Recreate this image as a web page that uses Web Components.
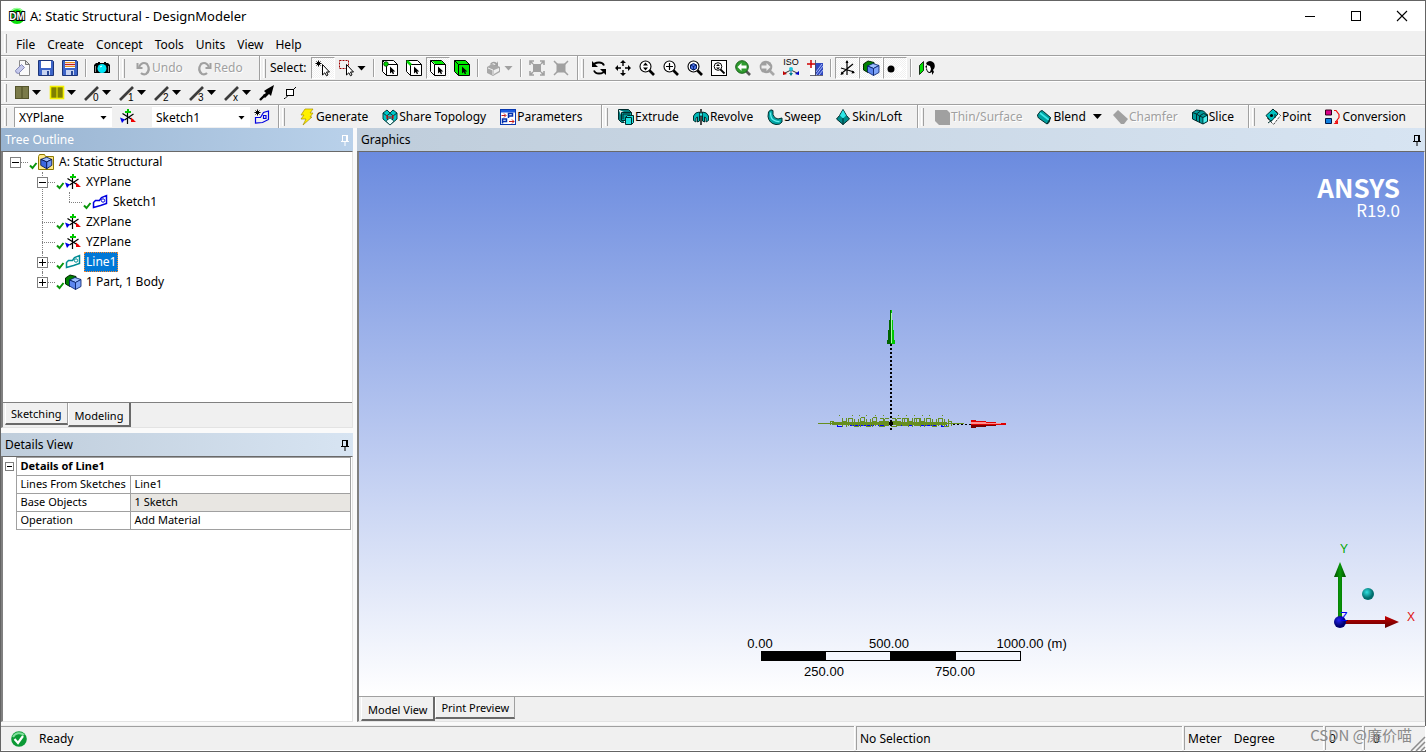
<!DOCTYPE html>
<html lang="en">
<head>
<meta charset="utf-8">
<title>A: Static Structural - DesignModeler</title>
<style>
  html, body { margin: 0; height: 100%; }
  body {
    font: 12px/16px "Noto Sans", "Noto Sans CJK SC", sans-serif;
    color: #000;
    background: #f0f0f0;
    overflow: hidden;
  }
</style>
</head>
<body>
<dm-app></dm-app>

<script>
/* ---------- icon artwork, 16 x 16 grid ---------- */
const lens = (inner, ring = '#000') =>
  `<circle cx="6.5" cy="6.5" r="5.5" fill="#fff" stroke="${ring}" stroke-width="1.1"/><path d="M10.500 10.500l4.500 4.500" stroke="${ring}" stroke-width="2.600"/>${inner}`;
const cube = (top, left, right, line = '#000') =>
  `<g stroke="${line}" stroke-width="1" stroke-linejoin="round"><path d="M1.500 4l7-2.500 6 2.500-6 3z" fill="${top}"/><path d="M1.500 4l7 3v8l-7-4z" fill="${left}"/><path d="M8.500 7l6-3v7l-6 4z" fill="${right}"/></g>`;
const cubelet = '<g stroke="#001a66" stroke-width=".8" stroke-linejoin="round"><path d="M4.500 6l5.500-2.500 6 2-5.500 3z" fill="#9ec0ff"/><path d="M4.500 6l6 2.500v7L4.500 12z" fill="#5d86ee"/><path d="M10.500 8.500l5.500-3v7l-5.500 3z" fill="#7ea4f8"/></g>';
const bodies = `<path d="M.5 4l4.500-3 6 1.500v4l-6 1v5l-4.500-2.500z" fill="#008000" stroke="#002800"/>${cubelet}`;
const frame = (fill, front) =>
  `<path d="M.5 .5h11l4 4v11h-11l-4-4z" fill="${fill}"/><rect x="5" y="5" width="10" height="10" fill="${front}"/><path d="M.5 .5h11l4 4v11h-11l-4-4zM.5 .5l4 4v11M4.500 4.500h11" fill="none" stroke="#000"/><path d="M8 6.500v7l1.700-1.500 1.200 2.300 1.200-.7-1-2.100h2.200z" fill="#000"/>`;
const cursor = '<path d="M7.500 4.500v10.500l2.300-2.200 1.700 3 1.500-.9-1.500-2.900h3z" fill="#fff" stroke="#000"/>';
const star = '<path d="M3.500 .5v6M.5 3.500h6M1.500 1.500l4 4M5.500 1.500l-4 4" stroke="#000" fill="none"/>';
const triad = '<path d="M7.500 2v13M2.500 4.500l11 7M13.500 5l-9 6" stroke="#000" stroke-width="1.200" fill="none"/><path d="M7 0h2v2h2v2H5V2h2z" fill="#00c800"/><path d="M0 8.500l5 2-3 3.500z" fill="#0000e8"/><path d="M11 8.500l5 4.500h-5z" fill="#f00000"/>';
const plate = c => `<path d="M1.500 8.500L3.500 6.500 7.500 6.500 9.500 3.500 14.500 1.500V9.500L8.500 11.500 1.500 13.500z" fill="#fff" stroke="${c}" stroke-width="1.500"/><circle cx="11" cy="6.500" r="1.700" fill="#fff" stroke="${c}"/>`;
const penLine = n => `<path d="M1 15l3-3L14 2" stroke="#3c3c3c" stroke-width="2.600" fill="none"/><text x="9" y="16" font-family="Liberation Sans" font-size="10" fill="#000">${n}</text>`;
const floppy = (label) => `<path d="M.5 .5h14l1 1v14H.5z" fill="#3c64c8" stroke="#1c3478"/><rect x="3" y="1" width="10" height="7" fill="#fff"/>${label}<rect x="4" y="10" width="8" height="5" fill="#c8d4f0"/><rect x="9" y="11" width="2" height="4" fill="#284898"/>`;

const ICONS = {
  dm: '<circle cx="8" cy="8" r="8" fill="#0be00b"/><path d="M2 4a7 7 0 0 1 12 0" stroke="#9cff9c" stroke-width="1.500" fill="none"/><text x="8" y="12" text-anchor="middle" font-family="Liberation Sans" font-weight="700" font-size="10" fill="#fff" stroke="#000" stroke-width="1.800" paint-order="stroke">DM</text>',
  new: '<path d="M5.500 .5h6l4 4v11h-10z" fill="#fafafa" stroke="#8a8a8a"/><path d="M11.500 .5v4h4z" fill="#ddd" stroke="#777"/><path d="M1.500 10.500l6-6 3 3-6 6q-3 0-3-3z" fill="#c5c9ec" stroke="#8488b8"/>',
  save: floppy(''),
  saveAs: floppy('<path d="M3 2.500h10M3 6.500h10" stroke="#e89018"/><path d="M3 4.500h10" stroke="#c02020" stroke-width="1.400"/>'),
  camera: '<path d="M0 5l2-2h2V2h2v1h4V2h2v1h2l2 2v8H0z" fill="#000"/><circle cx="8" cy="8.500" r="4.500" fill="#00e4f4"/><path d="M6 7l2-1" stroke="#fff"/><path d="M1.500 6v6M14.500 6v6" stroke="#888"/>',
  undo: '<path d="M2.500 3v5h5" fill="none" stroke="#a0a0a0" stroke-width="2"/><path d="M4 7Q7 1 12 4q4 6-1 10-3 1-5-1" fill="none" stroke="#a0a0a0" stroke-width="2.200"/>',
  redo: '<path d="M13.500 3v5h-5" fill="none" stroke="#a0a0a0" stroke-width="2"/><path d="M12 7Q9 1 4 4q-4 6 1 10 3 1 5-1" fill="none" stroke="#a0a0a0" stroke-width="2.200"/>',
  pick: star + cursor,
  boxPick: '<rect x=".5" y=".5" width="9" height="8" fill="none" stroke="#a00000" stroke-dasharray="2 1"/>' + cursor,
  selPoint: frame('#fff', '#fff') + '<circle cx="4" cy="4" r="2.300" fill="#00d800" stroke="#003800" stroke-width=".8"/>',
  selEdge: frame('#fff', '#fff') + '<path d="M1 1l4 4" stroke="#00d800" stroke-width="2.500"/>',
  selFace: frame('#fff', '#fff') + '<path d="M2 1h9.500l3 3H5z" fill="#00e800"/>',
  selBody: frame('#00e800', '#00e800'),
  cubeOff: '<path d="M1 7l5-3 6 2 2 1v5l-7 4-6-3z" fill="#a8a8a8"/><path d="M2 8l5 2v5" stroke="#f0f0f0" fill="none"/><path d="M8 10l5-2v3l-5 3z" fill="#f0f0f0"/><path d="M4 4q3-4 7-1l1-2v5H8l1.500-1.500Q7 2 5 5z" fill="#a0a0a0"/>',
  expandOff: '<rect x="4" y="4" width="8" height="8" fill="#a0a0a0"/><path d="M1 5V1h4M11 1h4v4M15 11v4h-4M5 15H1v-4M1 1l3 3M15 1l-3 3M1 15l3-3M15 15l-3-3" stroke="#a0a0a0" stroke-width="1.600" fill="none"/>',
  shrinkOff: '<rect x="3.500" y="3.500" width="9" height="9" fill="#a0a0a0"/><path d="M1 1l14 14M15 1L1 15" stroke="#a0a0a0" stroke-width="1.500"/>',
  rotate: '<path d="M2 6Q3 2.500 8 2.500q4 0 5 3M14 10q-1 3.500-6 3.500-4 0-5-3" fill="none" stroke="#000" stroke-width="1.800"/><path d="M1 1v6h6zM15 15V9H9z" fill="#000"/>',
  pan: '<path d="M8 2v4M8 10v4M2 8h4M10 8h4" stroke="#000" stroke-width="1.400"/><path d="M8 0l3 3H5zM8 16l3-3H5zM0 8l3-3v6zM16 8l-3-3v6z"/>',
  zoom: lens('<path d="M6.500 2.500l2.500 3H4zM6.500 10.500l2.500-3H4z"/>'),
  zoomBox: lens('<path d="M6.500 3v7M3 6.500h7" stroke="#000" stroke-width="1.200"/>'),
  zoomFit: lens('<path d="M3.500 5l3-1.500 3 1.500v3.500l-3 1.500-3-1.500z" fill="#4870e8" stroke="#00185c"/><path d="M3.500 5l3 1.500 3-1.500M6.500 6.500V10" stroke="#00185c" fill="none" stroke-width=".8"/>'),
  magnify: '<rect x=".5" y=".5" width="15" height="15" fill="#fff" stroke="#000"/><circle cx="7" cy="6.500" r="3.800" fill="none" stroke="#000"/><path d="M9.500 9.500l4 4" stroke="#000" stroke-width="1.800"/><path d="M7 4l2 2H5zM7 9.500l2-2H5z"/>',
  prevView: '<path d="M10 10l5 5" stroke="#555" stroke-width="2.600"/><circle cx="7" cy="7" r="6.300" fill="#2f9b2f" stroke="#176017"/><path d="M2.500 7l4-4v2.500h5v3h-5V11z" fill="#fff"/>',
  nextView: '<path d="M10 10l5 5" stroke="#a8a8a8" stroke-width="2.600"/><circle cx="7" cy="7" r="6.300" fill="#a0a0a0"/><path d="M11.500 7l-4-4v2.500h-5v3h5V11z" fill="#eee"/>',
  iso: '<text x="8" y="5" text-anchor="middle" font-family="Liberation Sans" font-size="9" fill="#000">ISO</text><path d="M8 9v6" stroke="#0060a0"/><path d="M8 10l-6 3M8 10l6 3" stroke="#333"/><circle cx="8" cy="9" r="2" fill="#20c8e0"/><path d="M6 13h4l-2 3z" fill="#008090"/><path d="M0 11v4l4-1z" fill="#c00000"/><path d="M16 11v4l-4-1z" fill="#0000c8"/>',
  lookAt: '<rect x="3" y="3" width="13" height="12" fill="#fff"/><rect x="8" y="3" width="8" height="12" fill="#3048c0"/><path d="M9 12l6-8M9 15l7-9M12 15l4-5" stroke="#a8bcf8"/><path d="M8.500 0v16M3 15.500h13" stroke="#445" stroke-width=".8"/><path d="M0 4h8M4 0v8" stroke="#d00000" stroke-width="1.500"/>',
  axes: '<path d="M8 1v14M2 8l13 4M14 4L3 13" stroke="#000" stroke-width="1.200" fill="none"/><path d="M8 0l1.500 3h-3zM1.500 15l1-3.500 2.500 2.500zM16 13l-3.500 .500 1-3z"/>',
  bodies,
  dot: '<circle cx="4" cy="9" r="3.500"/><path d="M13 6l3 3-3 3-3-3z" fill="#fff"/>',
  mirror: '<path d="M.5 5.500l4-4v9l-4 4z" fill="#00e000" stroke="#000" stroke-width=".8"/><path d="M7 3q4-4 8 0 2 4-1 7l1 2-2 3v-3q-4 3-6-3l1-1-2-1 2-2z" fill="#000"/><path d="M8 5l3 1 1 3-1 3q-3 0-3-4z" fill="#fff"/>',
  paneOlive: '<rect x="1.500" y="1.500" width="13" height="12" fill="#7b7b4a" stroke="#55552c"/><path d="M8 2v11" stroke="#4a4a20"/>',
  paneYellow: '<rect x="1.500" y="1.500" width="13" height="12" fill="#808000" stroke="#f4f000" stroke-width="1.600"/><path d="M8 2v11" stroke="#f4f000"/>',
  line0: penLine('0'), line1: penLine('1'), line2: penLine('2'), line3: penLine('3'), lineX: penLine('x'),
  arrow: '<path d="M1 15l5-5" stroke="#000" stroke-width="2.400"/><path d="M15 0l-3 11-2-2-4 4-1-1-1-2 3-2-2-2 3-2z" fill="#000"/>',
  vertex: '<path d="M1 13.500h1l3-3M10 5l3-3" stroke="#000" fill="none"/><rect x="3.500" y="4.500" width="7" height="6" fill="#fff" stroke="#000"/>',
  triad,
  newSketch: star + '<path d="M1.500 14V8.500h5l3-5 5-1.500v8.500l-6 3-7 .500zM9.500 6.500h2.500v3H9.500z" fill="none" stroke="#0000e0" stroke-width="1.200"/>',
  bolt: '<path d="M6 0h8l-3 4h3l-3 4h2L4 16l3-6H2l3-4H2z" fill="#fff000" stroke="#a89000" stroke-width=".7"/>',
  share: '<path d="M1 4l4-3 3 3 3-3 4 3v6l-7 6-7-6z" fill="#00c8c8" stroke="#003c3c"/><path d="M4 12l4-3 4 3-4 4z" fill="#e8ffff" stroke="#003c3c" stroke-width=".7"/><path d="M5.500 11V6L8 4.500 10.500 6v5M1 4l4 3M15 4l-4 3" fill="none" stroke="#003c3c"/><path d="M5 6v4M11 6v4M6 8h4" stroke="#e01010" stroke-width="1.200"/>',
  params: '<rect x=".5" y=".5" width="15" height="15" fill="#fff" stroke="#0838b0"/><rect x="1" y="1" width="14" height="2.500" fill="#1c5ce0"/><path d="M8.500 9V4.500h4v2.500h-4M2.500 14.500V10h4v2.500h-4" stroke="#0030b0" stroke-width="1.500" fill="none"/><path d="M1.500 6.500h4M9 12.500h5M4 4.500l2 2-2 2M12 10.500l2 2-2 2" stroke="#c01818" fill="none"/>',
  extrude: '<path d="M.5 .5h10l3 3v3M.5 .5v10l3 3h3" fill="#008080" stroke="#002c2c"/><path d="M3.500 3.500h10v8h-10z" fill="#00a0a0" stroke="#002c2c"/><path d="M5 10V5h7" stroke="#002c2c" fill="none"/><path d="M7.500 8.500l2-2h6v7l-2 2h-6z" fill="#20e0e0" stroke="#002c2c"/><path d="M7.500 8.500h6v7" fill="none" stroke="#002c2c"/>',
  revolve: '<path d="M.5 7Q2 3 6.500 3v9l-2 1V8L3 9v4l-2.500-1.500zM15.500 7Q14 3 9.500 3v9l2 1V8L13 9v4l2.500-1.500z" fill="#00b8b8" stroke="#003030"/><path d="M8 0v16" stroke="#000" stroke-width="1.400"/><path d="M6.500 4h3v3h-3z" fill="#40f0f0" stroke="#003030" stroke-width=".7"/>',
  sweep: '<path d="M1.500 3q2-3.500 4.500-1.500v4q1 4 5 4.500l4-1v4q-2 3-6 2.500-7-1-8-8z" fill="#00a4a4" stroke="#003030"/><path d="M3.500 3.500q0 6 3 7.500 3 2 6 1.500" fill="none" stroke="#60f0f0" stroke-width="1.300"/>',
  skin: '<path d="M8 .5l3.500 6 3 3.500L8 15.500 1.500 10l3-3.500z" fill="#008c8c" stroke="#002c2c"/><path d="M8 1l3 5.500L8 9.500 5 6.500z" fill="#30e8e8"/><path d="M8 9v7" stroke="#002c2c"/>',
  thin: '<path d="M1 1h12l3 3v12H5l-4-4z" fill="#a0a0a0"/>',
  blend: '<path d="M1.500 6l3-4q2-1 3 .5l7 6-1.500 5-2 1.500-8.500-6q-1-1.500-1-3z" fill="#00a0a0" stroke="#002c2c"/><path d="M4 4l9 7" stroke="#40e8e8" stroke-width="1.600"/><path d="M11 15l3.500-6.500" stroke="#002c2c" fill="none"/>',
  chamfer: '<path d="M1 6l5-5 10 9-4 5H9z" fill="#a0a0a0"/>',
  slice: '<path d="M.5 3.500l4-2.500 7 1 4 4v6.500L11 15 .5 10z" fill="#009c9c" stroke="#002c2c"/><path d="M.5 3.500l4 1.500v7M4.500 5l4-3M7.500 7l4-2.500 4 1.500M7.500 7v6.500M7.500 7l3.500 1.500V15M11 8.500l4.500-2.500M4.500 5l3 2" fill="none" stroke="#002c2c"/><path d="M11.500 9l3.500-2v5l-3.500 2z" fill="#50f0f0"/>',
  point: '<path d="M2.500 9.500l8-8 5 5-7 9z" fill="#fff" stroke="#000" stroke-dasharray="1 1"/><path d="M1 6.500L8 0l5 5-7 7.500z" fill="#00c0c0" stroke="#002c2c"/><circle cx="6.500" cy="6.500" r="1.600" fill="#000"/><path d="M3 14l4-3M10 5v4" stroke="#003030"/>',
  convert: '<path d="M.5 1h6v5h-6z" fill="#d80088" stroke="#300018"/><path d="M.5 9.500h6v5h-6z" fill="#1080e0" stroke="#001848"/><path d="M9 1.500h2l3 4v3l-3 4h-1" fill="none" stroke="#f01010" stroke-width="1.200"/><path d="M13 11v4H8.500z" fill="#f01010"/>',
  project: '<path d="M.5 2.500l1-2h5l1 2h8v13H.5z" fill="#ffe98a" stroke="#8c7800"/><g transform="translate(1.500 2) scale(.85)">' + cube('#9ec0ff', '#3c68e0', '#6c94f4', '#001050') + '</g>',
  sketch: plate('#0000e0'),
  lineBody: plate('#008c94'),
  check: '<path d="M2 11.500l2.500 2.500L8.500 9" fill="none" stroke="#0a960a" stroke-width="2"/>',
  pin: '<path d="M5.500 4v5M9.500 4v5M4 9.500h8M5 3.500h5M8 10v4" stroke="currentColor" fill="none"/><path d="M10.500 3v6" stroke="currentColor"/>',
  ok: '<circle cx="8" cy="8" r="7.800" fill="#0b9a35"/><path d="M2 6a7 7 0 0 1 11-2" stroke="#7fe09a" stroke-width="2" fill="none"/><path d="M3.500 8l3.500 4 5-7" stroke="#fff" stroke-width="2.200" fill="none"/>',
  minimize: '<path d="M3 8.500h10" stroke="#000"/>',
  maximize: '<rect x="3.500" y="3.500" width="9" height="9" fill="none" stroke="#000"/>',
  close: '<path d="M3 3l10 10M13 3L3 13" stroke="#000" stroke-width="1.100"/>',
  grow: '<path d="M2 16L16 2M7 16l9-9M12 16l4-4" stroke="#8c8c8c" stroke-width="1.500"/>'
};

class DmElement extends HTMLElement {
  connectedCallback() {
    if (this.shadowRoot) return;
    const root = this.attachShadow({ mode: 'open' });
    root.innerHTML = `<style>*{box-sizing:border-box}${this.constructor.css || ''}</style>${this.render()}`;
  }
  at(name, fallback = '') { return this.getAttribute(name) ?? fallback; }
}
const define = (tag, cls) => customElements.define(tag, cls);

define('dm-icon', class extends DmElement {
  static css = ':host{display:block;flex:none;width:16px;height:16px}svg{display:block;width:100%;height:100%;overflow:visible}';
  render() { return `<svg viewBox="0 0 16 16" fill="#000" aria-hidden="true">${ICONS[this.at('name')]}</svg>`; }
});

define('dm-title-bar', class extends DmElement {
  static css = `
    :host{display:flex;align-items:center;height:30px;background:#fff;padding-left:8px;flex:none}
    span{flex:1;margin-left:5px;font-size:13px}
    button{width:46px;height:30px;border:0;padding:0;background:none;display:grid;place-items:center}`;
  render() {
    return `<dm-icon name="dm"></dm-icon><span><slot></slot></span>
      <button aria-label="Minimize"><dm-icon name="minimize"></dm-icon></button>
      <button aria-label="Maximize"><dm-icon name="maximize"></dm-icon></button>
      <button aria-label="Close"><dm-icon name="close"></dm-icon></button>`;
  }
});

/* One horizontal row of the rebar */
define('dm-row', class extends DmElement {
  static css = `
    :host{display:flex;align-items:stretch;height:25px;flex:none;padding-left:1px;background:#f0f0f0;border-top:1px solid #a0a0a0;box-shadow:inset 0 1px #fff}
    :host([first]){border-top:0;box-shadow:none;height:24px}
    :host([slim]){height:24px}`;
  render() { return '<slot></slot>'; }
});

define('dm-band', class extends DmElement {
  static css = `
    :host{display:flex;align-items:center;flex:none;padding-right:4px;border-right:1px solid #a0a0a0;box-shadow:1px 0 #fff;margin-right:1px}
    :host([open]){border-right-color:transparent;box-shadow:none}
    i{width:8px;flex:none;align-self:stretch;padding:3px 3px 2px 2px;display:flex}
    i::before{content:"";flex:1;border-left:1px solid #fff;border-right:1px solid #a0a0a0}`;
  render() { return '<i></i><slot></slot>'; }
});

define('dm-sep', class extends DmElement {
  static css = ':host{display:block;flex:none;width:8px;height:18px;padding-left:3px}i{display:block;width:2px;height:100%;border-left:1px solid #a0a0a0;border-right:1px solid #fff}';
  render() { return '<i></i>'; }
});

define('dm-tool', class extends DmElement {
  static css = `
    :host{display:block;flex:none}
    button{font:inherit;color:inherit;display:flex;align-items:center;justify-content:center;width:24px;height:22px;padding:0;margin:0;border:0;background:none;white-space:nowrap}
    button.menu{width:35px;justify-content:flex-start;padding-left:4px;gap:2px}
    button.text{width:auto;justify-content:flex-start;padding:0 7px;gap:1px}
    button.text.menu{padding-right:3px}
    button.pressed{background:repeating-conic-gradient(#fff 0 25%,#f0f0f0 0 50%) 0 0/2px 2px;border:1px solid #fff;border-left-color:#a0a0a0;border-top-color:#a0a0a0}
    button:disabled{color:#a0a0a0;text-shadow:1px 1px #fff}
    button b{width:9px;height:5px;background:#000;clip-path:polygon(0 0,100% 0,50% 100%);flex:none}
    button.text b{margin-left:6px}
    button:disabled b{background:#a0a0a0}`;
  render() {
    const label = this.at('label');
    const cls = [label && 'text', this.hasAttribute('menu') && 'menu', this.hasAttribute('pressed') && 'pressed'].filter(Boolean).join(' ');
    return `<button class="${cls}" aria-label="${label || this.at('hint')}" ${this.hasAttribute('disabled') ? 'disabled' : ''}>
      <dm-icon name="${this.at('icon')}"></dm-icon>${label ? `<span>${label}</span>` : ''}${this.hasAttribute('menu') ? '<b></b>' : ''}</button>`;
  }
});

define('dm-combo', class extends DmElement {
  static css = `
    :host{display:block;flex:none}
    label{display:flex;position:relative}
    select{appearance:none;font:inherit;color:#000;width:98px;height:20px;padding:1px 4px 0;margin:0;border:0;border-radius:0;background:#fff;border-left:1px solid #a0a0a0;border-top:1px solid #a0a0a0}
    :host([flat]) select{border-color:#fff;padding:1px 3px 0}
    b{position:absolute;right:5px;top:9px;width:7px;height:4px;background:#000;clip-path:polygon(0 0,100% 0,50% 100%);pointer-events:none}`;
  render() { return `<label><select aria-label="${this.at('label')}"><option>${this.at('value')}</option></select><b></b></label>`; }
});

define('dm-menu', class extends DmElement {
  static css = ':host{display:flex;align-items:center;padding-top:4px}button{font:inherit;color:inherit;border:0;background:none;padding:0 6px;height:20px}';
  render() { return this.at('items').split(',').map(t => `<button>${t}</button>`).join(''); }
});

define('dm-panel', class extends DmElement {
  static css = `
    :host{display:flex;flex-direction:column;min-width:0;min-height:0}
    header{display:flex;align-items:center;justify-content:space-between;height:23px;flex:none;padding:0 0 0 4px;background:linear-gradient(90deg,#bfcddb,#d7e4f2)}
    :host([active]) header{background:linear-gradient(90deg,#99b4d1,#b9d1ea);color:#fff}
    h2{margin:0;font:inherit}
    header button{border:0;background:none;padding:0;color:inherit}
    section{flex:1;min-height:0;display:flex;flex-direction:column;border:1px solid #e3e3e3;border-left:2px solid #808080;border-top:1px solid #696969;background:#f0f0f0}`;
  render() {
    return `<header><h2>${this.at('heading')}</h2><button aria-label="Auto hide"><dm-icon name="pin"></dm-icon></button></header><section><slot></slot></section>`;
  }
});

define('dm-tree', class extends DmElement {
  static css = ':host{display:block;flex:1;background:#fff;min-height:0;border-bottom:1px solid #808080}';
  render() { return '<slot></slot>'; }
});

/* A row plus its nested rows; connectors are painted over the gutter */
define('dm-node', class extends DmElement {
  static css = `
    :host{display:block;position:relative}
    .row{display:flex;align-items:center;height:20px;position:relative}
    .gut{width:25px;height:20px;flex:none;position:relative}
    .gut::before{content:"";position:absolute;left:12px;width:13px;top:10px;border-top:1px dotted #808080}
    :host([nested])::before{content:"";position:absolute;left:12px;top:0;bottom:0;border-left:1px dotted #808080}
    :host([last])::before{bottom:auto;height:10px}
    .box{position:absolute;left:7px;top:5px;width:11px;height:11px;padding:0;background:#fff;border:1px solid #808080}
    .box::before{content:"";position:absolute;left:1px;right:1px;top:4px;height:1px;background:#000}
    .box.plus::after{content:"";position:absolute;top:1px;bottom:1px;left:4px;width:1px;background:#000}
    .check{margin-right:-6px}
    .label{margin-left:3px;padding:0 2px;height:20px;line-height:19px}
    .label.sel{background:#0078d7;color:#fff;outline:1px dotted #ff8728;outline-offset:-1px}
    .kids{padding-left:27px}`;
  render() {
    const box = this.at('box');
    return `<div class="row"><span class="gut">${box ? `<button class="box ${box}" aria-label="${box === 'plus' ? 'Expand' : 'Collapse'}"></button>` : ''}</span>
      <dm-icon class="check" name="check"></dm-icon><dm-icon name="${this.at('icon')}"></dm-icon>
      <span class="label ${this.hasAttribute('selected') ? 'sel' : ''}">${this.at('label')}</span></div>
      <div class="kids"><slot></slot></div>`;
  }
});

define('dm-tabs', class extends DmElement {
  static css = `
    :host{display:flex;align-items:flex-start;height:24px;flex:none;background:#f0f0f0;padding-left:2px}
    button{font:inherit;font-size:11px;color:inherit;background:#f0f0f0;height:22px;margin:0;padding:2px 5px 0;border:0;border-left:1px solid #fff;border-bottom:2px solid #696969;border-right:1px solid #a0a0a0}
    button.on{height:24px;padding:3px 6px 0;border-right:2px solid #696969}`;
  render() {
    return this.at('items').split(',').map(t => `<button role="tab" class="${t === this.at('current') ? 'on' : ''}">${t}</button>`).join('');
  }
});

define('dm-details', class extends DmElement {
  static css = `
    :host{display:block;flex:1;background:#fff;font-size:11px;padding-right:1px}
    table{width:100%;border-collapse:collapse;table-layout:fixed}
    col.g{width:13px}col.k{width:114px}
    td,th{height:18px;line-height:14px;padding:0 4px 2px;text-align:left;border:1px solid #a0a0a0;white-space:nowrap;overflow:hidden}
    th,td{padding-right:0}
    .gut{border:0;padding:0}
    .ro{background:#e8e6e2}
    button{display:block;position:relative;width:9px;height:9px;margin:0 2px;padding:0;background:#fff;border:1px solid #808080}
    button::before{content:"";position:absolute;left:1px;right:1px;top:3px;height:1px;background:#000}`;
  render() {
    return `<table><colgroup><col class="g"><col class="k"><col></colgroup>
      <tr><td class="gut"><button aria-label="Collapse"></button></td><th colspan="2">Details of Line1</th></tr>
      <tr><td class="gut"></td><td>Lines From Sketches</td><td>Line1</td></tr>
      <tr><td class="gut"></td><td>Base Objects</td><td class="ro">1 Sketch</td></tr>
      <tr><td class="gut"></td><td>Operation</td><td>Add Material</td></tr></table>`;
  }
});

/* Model canvas: free placement of the model, logo, triad and ruler */
define('dm-viewport', class extends DmElement {
  static css = `
    :host{display:block;position:relative;flex:1;min-height:0;overflow:hidden;background:linear-gradient(#6b8bdf,#fff);border-bottom:1px solid #a0a0a0}
    svg{position:absolute;overflow:visible}
    .model{left:50%;top:50%;margin:-124px 0 0 -82px}
    .ruler{left:50%;bottom:14px;margin-left:-151px;font:13px "Liberation Sans",sans-serif}
    .triad{right:1px;bottom:58px;font:12px "Liberation Sans",sans-serif}
    .logo{position:absolute;right:24px;top:22px;color:#fff;text-align:right;font:700 26px/26px "Noto Sans CJK SC",sans-serif}
    .logo small{display:block;font-size:17px;line-height:20px;font-weight:400}`;
  render() {
    const shapes = ['M0-5v9M0-1h4M4-5v9', 'M0-4v7h4M0-4h4M0-1h4', 'M0-5v9M0-5h4v4H0l4 5', 'M0 3v-7h4v7', 'M0-4h5v7H0zM2-4v7', 'M1-4h4v3H1v5h5', 'M0-4v8h4v-8'];
    let marks = '', dots = '';
    for (let i = 0; i < 18; i++) marks += `<path transform="translate(${32 + i * 6}.5 122.500)" d="${shapes[(i * 3 + (i >> 2)) % 7]}"/>`;
    for (const x of [29, 42, 49, 56, 65, 73, 88, 96, 104, 112, 119, 132]) dots += `<rect x="${x}" y="115" width="1" height="1"/>`;
    return `
    <svg class="model" width="210" height="140" viewBox="0 0 210 140" shape-rendering="crispEdges">
      <path d="M27 122.500h5v4h-5zM40 125.500h24M68 125.500h10M90 125.500h12M108 125.500h18M131 122.500h5v4h-5z" fill="none" stroke="#0000ff"/>
      <g fill="none" stroke="#668e20">${marks}
        <path d="M8 123.500h146"/><path d="M20 121.500h4M20.500 121v4M138 121.500h3.500v4"/></g>
      <path d="M22 122h115v3H22z" fill="#668e20"/><g fill="#668e20">${dots}</g>
      <path d="M81 44v86" stroke="#000" stroke-width="2" stroke-dasharray="2 2"/>
      <path d="M143 124.500h18" stroke="#000" stroke-width="1" stroke-dasharray="2 2"/>
      <path d="M79 122h4v3h-4z"/>
      <path d="M80 10h2v10h1v10h1v10h1v4h-8v-4h1V30h1V20h1z" fill="#00c800"/><path d="M80 10h1v34h-4v-4h1V30h1V20h1z" fill="#006400"/><path d="M81 13h1v30h-1z" fill="#a8ffa8"/>
      <path d="M161 120h5v1h10v1h10v1h10v2h-10v1h-10v1h-10v1h-5z" fill="#e00000"/><path d="M161 122h15v1h15v1h-30z" fill="#ff8c8c"/><path d="M161 125h25v1h-10v1h-10v1h-5z" fill="#780000"/>
    </svg>
    <svg class="ruler" width="324" height="46" viewBox="0 0 324 46">
      <rect x="20.500" y="15.500" width="259" height="9" fill="#f4f6fd" stroke="#000"/><path d="M20 15h65v10H20zM149 15h66v10h-66z"/>
      <g text-anchor="middle"><text x="19" y="12">0.00</text><text x="148" y="12">500.00</text><text x="279" y="12">1000.00</text><text x="316" y="12">(m)</text><text x="83" y="40">250.00</text><text x="214" y="40">750.00</text></g>
    </svg>
    <svg class="triad" width="92" height="96" viewBox="0 0 92 96">
      <defs>
        <linearGradient id="gy"><stop stop-color="#004c00"/><stop offset=".5" stop-color="#089808"/><stop offset="1" stop-color="#004c00"/></linearGradient>
        <linearGradient id="gx" x2="0" y2="1"><stop stop-color="#c80000"/><stop offset="1" stop-color="#5c0000"/></linearGradient>
        <radialGradient id="gb" cx=".4" cy=".35"><stop stop-color="#2424f0"/><stop offset="1" stop-color="#000070"/></radialGradient>
        <radialGradient id="gc" cx=".4" cy=".35"><stop stop-color="#30e0e0"/><stop offset="1" stop-color="#006c6c"/></radialGradient>
      </defs>
      <path d="M7 33h4v47H7zM9 20l6 15H3z" fill="url(#gy)"/>
      <path d="M10 78h46v4H10zM54 74l14 6-14 6z" fill="url(#gx)"/>
      <circle cx="9" cy="80" r="6" fill="url(#gb)"/><circle cx="37" cy="52" r="6" fill="url(#gc)"/>
      <g text-anchor="middle"><text x="13" y="11" fill="#00a800">Y</text><text x="80" y="79" fill="#e01010">X</text><text x="13" y="79" fill="#0000f0">Z</text></g>
    </svg>
    <div class="logo">ANSYS<small>R19.0</small></div>`;
  }
});

define('dm-status', class extends DmElement {
  static css = `
    :host{display:grid;grid-template-columns:1fr 326px 139px 37px 61px;column-gap:2px;height:26px;flex:none;position:relative;background:#f0f0f0;padding:1px 0}
    div{display:flex;align-items:center;padding-left:3px;border-left:1px solid #a0a0a0;border-top:1px solid #a0a0a0;box-shadow:1px 0 #fff,0 1px #fff;white-space:pre}
    .ready{gap:12px;padding-left:10px;border-left:0}
    .units{gap:12px}
    .end{padding-left:8px}
    .grip{position:absolute;right:0;bottom:0}
    .mark{position:absolute;right:13px;top:0;font:15px/20px "Noto Sans CJK SC",sans-serif;color:#8a8a8a}`;
  render() {
    return `<div class="ready"><dm-icon name="ok"></dm-icon>Ready</div><div>No Selection</div><div class="units"><span>Meter</span><span>Degree</span></div><div>0</div><div class="end">0</div>
      <dm-icon class="grip" name="grow"></dm-icon><span class="mark">CSDN @廉价喵</span>`;
  }
});

define('dm-app', class extends DmElement {
  static css = `
    :host{display:flex;flex-direction:column;height:100vh;box-sizing:border-box;border:1px solid #646464;background:#f0f0f0}
    .work{flex:1;min-height:0;display:grid;grid-template-columns:352px minmax(0,1fr);grid-template-rows:minmax(0,1fr);column-gap:4px;background:#fafafa;padding-bottom:3px}
    .side{display:flex;flex-direction:column;gap:5px;min-height:0}
    .outline{flex:300 1 0}.details{flex:289 1 0}
    .select{width:42px;flex:none;padding-left:1px}
    .gap{width:4px;flex:none}
    .undo{width:140px}
    .first{width:322px}.second{width:315px}.third{width:330px}`;
  render() {
    const t = (icon, hint, extra = '') => `<dm-tool icon="${icon}" hint="${hint}" ${extra}></dm-tool>`;
    const l = (icon, label, extra = '') => `<dm-tool icon="${icon}" label="${label}" ${extra}></dm-tool>`;
    const gap = '<span class="gap"></span>';
    return `
    <dm-title-bar>A: Static Structural - DesignModeler</dm-title-bar>
    <dm-row first><dm-band open><dm-menu items="File,Create,Concept,Tools,Units,View,Help"></dm-menu></dm-band></dm-row>
    <dm-row>
      <dm-band>${t('new', 'New')}${t('save', 'Save')}${t('saveAs', 'Save as')}<dm-sep></dm-sep>${t('camera', 'Image capture')}</dm-band>
      <dm-band class="undo">${l('undo', 'Undo', 'disabled')}${l('redo', 'Redo', 'disabled')}</dm-band>
      <dm-band><span class="select">Select:</span>${t('pick', 'New selection', 'pressed')}${t('boxPick', 'Select mode', 'menu')}<dm-sep></dm-sep>
        ${t('selPoint', 'Points')}${t('selEdge', 'Edges')}${t('selFace', 'Faces', 'pressed')}${t('selBody', 'Bodies')}<dm-sep></dm-sep>
        ${t('cubeOff', 'Extend selection', 'menu disabled')}<dm-sep></dm-sep>${t('expandOff', 'Expand', 'disabled')}${t('shrinkOff', 'Shrink', 'disabled')}</dm-band>
      <dm-band open>${t('rotate', 'Rotate')}${t('pan', 'Pan')}${t('zoom', 'Zoom')}${t('zoomBox', 'Box zoom')}${t('zoomFit', 'Zoom to fit')}${t('magnify', 'Magnifier')}${t('prevView', 'Previous view')}${t('nextView', 'Next view', 'disabled')}${t('iso', 'Isometric view')}${t('lookAt', 'Look at')}<dm-sep></dm-sep>
        ${t('axes', 'Display plane', 'pressed')}${t('bodies', 'Display model', 'pressed')}${t('dot', 'Display points', 'pressed')}<dm-sep></dm-sep>${t('mirror', 'Look at face')}</dm-band>
    </dm-row>
    <dm-row slim>
      <dm-band open>${t('paneOlive', 'Face colour', 'menu')}${t('paneYellow', 'Edge colour', 'menu')}${[0, 1, 2, 3].map(n => t('line' + n, 'Edges joined ' + n, 'menu')).join('')}${t('lineX', 'Edges joined many', 'menu')}${t('arrow', 'Edge direction')}${t('vertex', 'Display vertices')}</dm-band>
    </dm-row>
    <dm-row slim>
      <dm-band>${gap}<dm-combo label="Active plane" value="XYPlane"></dm-combo>${gap}${t('triad', 'New plane')}${gap}${gap}${gap}<dm-combo flat label="Active sketch" value="Sketch1"></dm-combo>${t('newSketch', 'New sketch')}</dm-band>
      <dm-band class="first">${gap}${l('bolt', 'Generate')}${l('share', 'Share Topology')}${l('params', 'Parameters')}</dm-band>
      <dm-band class="second">${l('extrude', 'Extrude')}${l('revolve', 'Revolve')}${l('sweep', 'Sweep')}${l('skin', 'Skin/Loft')}</dm-band>
      <dm-band class="third">${l('thin', 'Thin/Surface', 'disabled')}${l('blend', 'Blend', 'menu')}${l('chamfer', 'Chamfer', 'disabled')}${l('slice', 'Slice')}</dm-band>
      <dm-band open>${l('point', 'Point')}${l('convert', 'Conversion')}</dm-band>
    </dm-row>
    <div class="work">
      <div class="side">
        <dm-panel class="outline" active heading="Tree Outline">
          <dm-tree>
            <dm-node box="minus" icon="project" label="A: Static Structural">
              <dm-node nested box="minus" icon="triad" label="XYPlane"><dm-node nested last icon="sketch" label="Sketch1"></dm-node></dm-node>
              <dm-node nested icon="triad" label="ZXPlane"></dm-node>
              <dm-node nested icon="triad" label="YZPlane"></dm-node>
              <dm-node nested box="plus" icon="lineBody" label="Line1" selected></dm-node>
              <dm-node nested last box="plus" icon="bodies" label="1 Part, 1 Body"></dm-node>
            </dm-node>
          </dm-tree>
          <dm-tabs items="Sketching,Modeling" current="Modeling"></dm-tabs>
        </dm-panel>
        <dm-panel class="details" heading="Details View"><dm-details></dm-details></dm-panel>
      </div>
      <dm-panel heading="Graphics">
        <dm-viewport></dm-viewport>
        <dm-tabs items="Model View,Print Preview" current="Model View"></dm-tabs>
      </dm-panel>
    </div>
    <dm-status></dm-status>`;
  }
});
</script>
</body>
</html>
